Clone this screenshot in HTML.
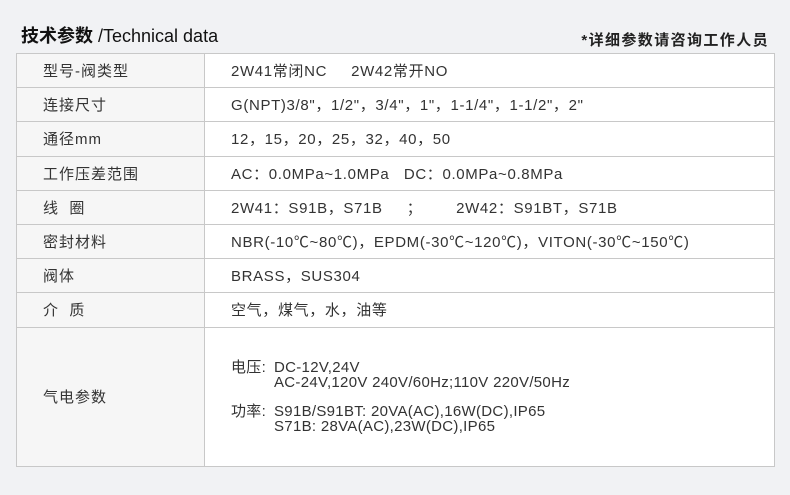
<!DOCTYPE html>
<html><head><meta charset="utf-8"><style>
body{margin:0;width:790px;height:495px;background:#f1f2f4;font-family:"Liberation Sans","Noto Sans CJK SC",sans-serif;color:#222;position:relative;overflow:hidden}
.t1{position:absolute;left:21px;top:22px;font-size:18px;color:#111}
.t1 b{font-weight:bold}
.t2{position:absolute;right:21px;top:29px;font-size:15px;font-weight:bold;color:#222;letter-spacing:1.4px}
table{position:absolute;left:16px;top:53px;width:759px;border-collapse:collapse;font-size:15px}
td{border:1px solid #c8c8c8;padding:0;height:33.2px;color:#333}
td.l{width:188px;background:#f6f6f6;padding-left:26px;box-sizing:border-box;letter-spacing:1px}
td.v{background:#fff;padding-left:26px;letter-spacing:0.65px}
.big td{height:138px}
.big .v{line-height:15px;letter-spacing:0.3px}
</style></head><body>
<div class="t1"><b>技术参数</b> /Technical data</div>
<div class="t2">*详细参数请咨询工作人员</div>
<table>
<tr><td class="l">型号-阀类型</td><td class="v">2W41常闭NC&nbsp;&nbsp;&nbsp;&nbsp;&nbsp;2W42常开NO</td></tr>
<tr><td class="l">连接尺寸</td><td class="v">G(NPT)3/8"，1/2"，3/4"，1"，1-1/4"，1-1/2"，2"</td></tr>
<tr><td class="l">通径mm</td><td class="v">12，15，20，25，32，40，50</td></tr>
<tr><td class="l">工作压差范围</td><td class="v">AC：0.0MPa~1.0MPa&nbsp;&nbsp;&nbsp;DC：0.0MPa~0.8MPa</td></tr>
<tr><td class="l">线&nbsp;&nbsp;圈</td><td class="v">2W41：S91B，S71B&nbsp;&nbsp;&nbsp;&nbsp;&nbsp;；&nbsp;&nbsp;&nbsp;&nbsp;&nbsp;&nbsp;&nbsp;2W42：S91BT，S71B</td></tr>
<tr><td class="l">密封材料</td><td class="v">NBR(-10℃~80℃)，EPDM(-30℃~120℃)，VITON(-30℃~150℃)</td></tr>
<tr><td class="l">阀体</td><td class="v">BRASS，SUS304</td></tr>
<tr><td class="l">介&nbsp;&nbsp;质</td><td class="v">空气，煤气，水，油等</td></tr>
<tr class="big"><td class="l">气电参数</td><td class="v">
<div style="display:flex"><span style="width:43px">电压:</span><span>DC-12V,24V<br>AC-24V,120V 240V/60Hz;110V 220V/50Hz</span></div>
<div style="display:flex;margin-top:14px"><span style="width:43px">功率:</span><span>S91B/S91BT: 20VA(AC),16W(DC),IP65<br>S71B: 28VA(AC),23W(DC),IP65</span></div>
</td></tr>
</table>
</body></html>
